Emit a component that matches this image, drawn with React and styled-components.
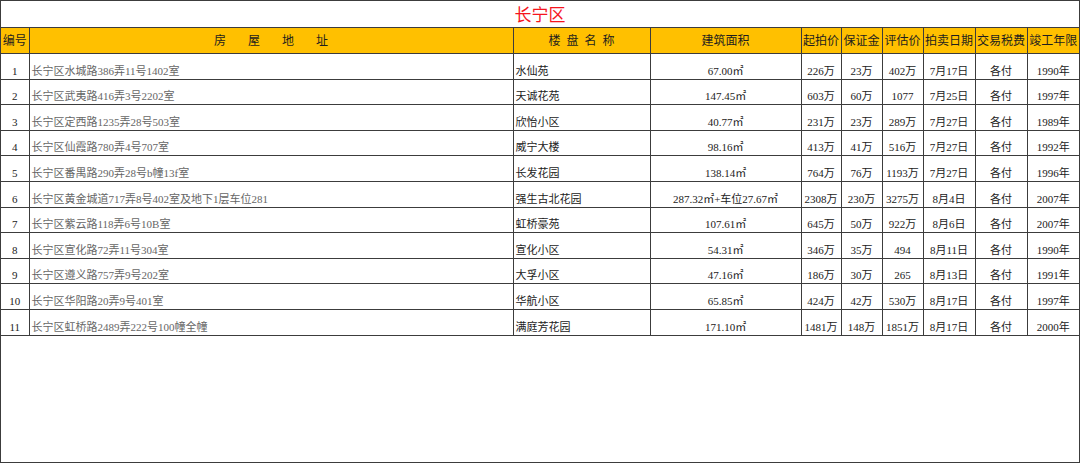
import React from 'react';
import styled, { createGlobalStyle } from 'styled-components';

const GlobalStyle = createGlobalStyle`
  html, body { margin: 0; padding: 0; background: #fff; }
  body { font-family: "Liberation Serif", "Noto Sans CJK SC", serif; }
`;

const columns = [28, 484, 137, 151, 40, 41, 41, 52, 52, 52];

const headers = [
  { label: '编号' },
  { label: '房屋地址', spacing: 22 },
  { label: '楼盘名称', spacing: 6 },
  { label: '建筑面积' },
  { label: '起拍价' },
  { label: '保证金' },
  { label: '评估价' },
  { label: '拍卖日期' },
  { label: '交易税费' },
  { label: '竣工年限' },
];

const rows = [
  ['1', '长宁区水城路386弄11号1402室', '水仙苑', '67.00㎡', '226万', '23万', '402万', '7月17日', '各付', '1990年'],
  ['2', '长宁区武夷路416弄3号2202室', '天诚花苑', '147.45㎡', '603万', '60万', '1077', '7月25日', '各付', '1997年'],
  ['3', '长宁区定西路1235弄28号503室', '欣怡小区', '40.77㎡', '231万', '23万', '289万', '7月27日', '各付', '1989年'],
  ['4', '长宁区仙霞路780弄4号707室', '威宁大楼', '98.16㎡', '413万', '41万', '516万', '7月27日', '各付', '1992年'],
  ['5', '长宁区番禺路290弄28号b幢13f室', '长发花园', '138.14㎡', '764万', '76万', '1193万', '7月27日', '各付', '1996年'],
  ['6', '长宁区黄金城道717弄8号402室及地下1层车位281', '强生古北花园', '287.32㎡+车位27.67㎡', '2308万', '230万', '3275万', '8月4日', '各付', '2007年'],
  ['7', '长宁区紫云路118弄6号10B室', '虹桥豪苑', '107.61㎡', '645万', '50万', '922万', '8月6日', '各付', '2007年'],
  ['8', '长宁区宣化路72弄11号304室', '宣化小区', '54.31㎡', '346万', '35万', '494', '8月11日', '各付', '1990年'],
  ['9', '长宁区遵义路757弄9号202室', '大孚小区', '47.16㎡', '186万', '30万', '265', '8月13日', '各付', '1991年'],
  ['10', '长宁区华阳路20弄9号401室', '华航小区', '65.85㎡', '424万', '42万', '530万', '8月17日', '各付', '1997年'],
  ['11', '长宁区虹桥路2489弄222号100幢全幢', '满庭芳花园', '171.10㎡', '1481万', '148万', '1851万', '8月17日', '各付', '2000年'],
];

const Sheet = styled.div`
  width: 1080px;
  height: 463px;
  box-sizing: border-box;
  border: 1px solid #3c3c3c;
  background: #fff;
  overflow: hidden;
`;

const Grid = styled.table`
  width: 100%;
  table-layout: fixed;
  border-collapse: collapse;

  td, th {
    border: 1px solid #3c3c3c;
    box-sizing: border-box;
  }
  tr > :first-child { border-left: none; }
  tr > :last-child { border-right: none; }
  tr:first-child > * { border-top: none; }
`;

const TitleRow = styled.tr`
  height: 26px;
`;

const HeadRow = styled.tr`
  height: 26.5px;
`;

const DataRow = styled.tr`
  height: 25.6px;
`;

const TitleCell = styled.td`
  padding: 0;
  text-align: center;
  vertical-align: middle;
  color: #f5141e;
  font-family: "Noto Sans CJK SC", sans-serif;
  font-size: 17px;
  line-height: 22px;
  font-weight: normal;
`;

const HeadCell = styled.th`
  padding: 0;
  background: #ffc000;
  color: #1e1e1e;
  font-family: "Noto Sans CJK SC", sans-serif;
  font-size: 12px;
  line-height: 16px;
  font-weight: normal;
  text-align: center;
  vertical-align: middle;
  white-space: nowrap;
  letter-spacing: ${(p) => p.$spacing || 0}px;
  text-indent: ${(p) => p.$spacing || 0}px;
`;

const Cell = styled.td`
  padding: 0 0 1px ${(p) => (p.$align === 'left' ? '2px' : '0')};
  color: ${(p) => (p.$muted ? '#666' : '#222')};
  font-size: 11px;
  line-height: 13px;
  text-align: ${(p) => p.$align || 'center'};
  vertical-align: bottom;
  white-space: nowrap;
  overflow: hidden;
`;

export default function App() {
  return (
    <>
      <GlobalStyle />
      <Sheet>
        <Grid>
          <colgroup>
            {columns.map((w, i) => (
              <col key={i} style={{ width: w }} />
            ))}
          </colgroup>
          <tbody>
            <TitleRow>
              <TitleCell colSpan={10}>长宁区</TitleCell>
            </TitleRow>
            <HeadRow>
              {headers.map((h) => (
                <HeadCell key={h.label} $spacing={h.spacing}>
                  {h.label}
                </HeadCell>
              ))}
            </HeadRow>
            {rows.map((r) => (
              <DataRow key={r[0]}>
                {r.map((v, i) => (
                  <Cell
                    key={i}
                    $align={i === 1 || i === 2 ? 'left' : 'center'}
                    $muted={i === 1}
                  >
                    {v}
                  </Cell>
                ))}
              </DataRow>
            ))}
          </tbody>
        </Grid>
      </Sheet>
    </>
  );
}
